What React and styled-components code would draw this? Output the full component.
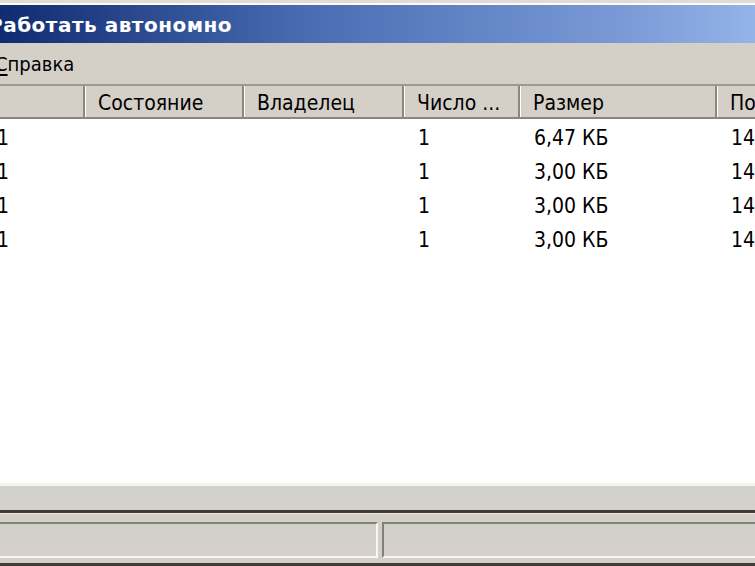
import React from 'react'
import styled, { createGlobalStyle } from 'styled-components'

const GlobalStyle = createGlobalStyle`
    html, body {
        margin: 0;
        padding: 0;
        background: #d4d0c8;
        overflow: hidden;
    }
`

const columns = ['', 'Состояние', 'Владелец', 'Число ...', 'Размер', 'По']

const rows = [
    { id: 1, first: '1', count: '1', size: '6,47 КБ', date: '14' },
    { id: 2, first: '1', count: '1', size: '3,00 КБ', date: '14' },
    { id: 3, first: '1', count: '1', size: '3,00 КБ', date: '14' },
    { id: 4, first: '1', count: '1', size: '3,00 КБ', date: '14' },
]

const App = () => {
    return (
        <Screen>
            <GlobalStyle />
            <Window>
                <TopEdge />
                <TitleBar>Работать автономно</TitleBar>
                <MenuBar>
                    <MenuItem><u>С</u>правка</MenuItem>
                </MenuBar>
                <ListView>
                    <Header>
                        {columns.map((col, i) => (
                            <HeaderCell key={i} first={i === 0}>{col}</HeaderCell>
                        ))}
                    </Header>
                    <Body>
                        {rows.map((row) => (
                            <Row key={row.id}>
                                <Cell first>{row.first}</Cell>
                                <Cell></Cell>
                                <Cell></Cell>
                                <Cell>{row.count}</Cell>
                                <Cell>{row.size}</Cell>
                                <Cell>{row.date}</Cell>
                            </Row>
                        ))}
                    </Body>
                </ListView>
                <ScrollTrack />
                <StatusBar>
                    <StatusPanel width="398px" />
                    <StatusPanel />
                </StatusBar>
            </Window>
        </Screen>
    )
}

//Styled Components

const Screen = styled.div`
    width: 755px;
    height: 566px;
    overflow: hidden;
    font-family: "DejaVu Sans Condensed", "DejaVu Sans", sans-serif;
    font-stretch: condensed;
`

const Window = styled.div`
    width: 820px;
    height: 566px;
    margin-left: -20px;
    display: flex;
    flex-direction: column;
    background: #d4d0c8;
`

const TopEdge = styled.div`
    height: 3px;
    background: #e2dada;
    border-bottom: 2px solid #fcfcf2;
`

const TitleBar = styled.div`
    height: 38px;
    display: flex;
    align-items: center;
    padding-left: 8px;
    padding-top: 1px;
    box-sizing: border-box;
    background: linear-gradient(to right, #0c286e 0%, #4a6cb2 40%, #7c9cd8 80%, #9cbeee 100%);
    color: #fff;
    font-family: "DejaVu Sans", sans-serif;
    font-stretch: normal;
    font-weight: bold;
    font-size: 20px;
    letter-spacing: 0.5px;
`

const MenuBar = styled.div`
    height: 41px;
    display: flex;
    align-items: center;
    background: #d4d0c8;
`

const MenuItem = styled.span`
    padding-left: 15px;
    font-size: 20px;
    color: #000;

    u {
        text-decoration-thickness: 2px;
        text-underline-offset: 3px;
    }
`

const ListView = styled.div`
    flex: 1;
    display: flex;
    flex-direction: column;
    border-top: 2px solid #9c9893;
    background: #fff;
`

const grid = `
    display: grid;
    grid-template-columns: 105px 159px 160px 116px 197px 1fr;
`

const Header = styled.div`
    ${grid}
    height: 31px;
    background: #d4d0c8;
    border-bottom: 2px solid #8a8682;
`

const HeaderCell = styled.div`
    display: flex;
    align-items: center;
    padding-left: ${(p) => (p.first ? '16px' : '12px')};
    padding-top: 3px;
    border-left: ${(p) => (p.first ? 'none' : '1px solid #fff')};
    border-right: 2px solid #8a8682;
    font-size: 21px;
    color: #000;
    white-space: nowrap;
    overflow: hidden;
`

const Body = styled.div`
    flex: 1;
    padding-top: 1px;
    background: #fff;
`

const Row = styled.div`
    ${grid}
    height: 34px;
`

const Cell = styled.div`
    display: flex;
    align-items: center;
    padding-left: ${(p) => (p.first ? '17px' : '14px')};
    padding-top: 2px;
    font-size: 21px;
    color: #000;
    white-space: nowrap;
`

const ScrollTrack = styled.div`
    height: 24px;
    background: linear-gradient(#d0d2cc, #d6d0cc);
    border-top: 3px solid #f6f6ee;
    border-bottom: 3px solid #3e3c3a;
`

const StatusBar = styled.div`
    height: 53px;
    display: flex;
    gap: 4px;
    padding-top: 8px;
    box-sizing: border-box;
    background: #d4d0c8;
    border-top: 1px solid #eceae2;
    border-bottom: 3px solid #403a3a;
`

const StatusPanel = styled.div`
    height: 36px;
    box-sizing: border-box;
    ${(p) => (p.width ? `width: ${p.width};` : 'flex: 1;')}
    border-top: 2px solid #7e827c;
    border-left: 2px solid #7e827c;
    border-bottom: 2px solid #fbf6f4;
    border-right: 2px solid #fbf6f4;
    background: linear-gradient(#d0d0c8, #d6d0cc);
`

export default App
